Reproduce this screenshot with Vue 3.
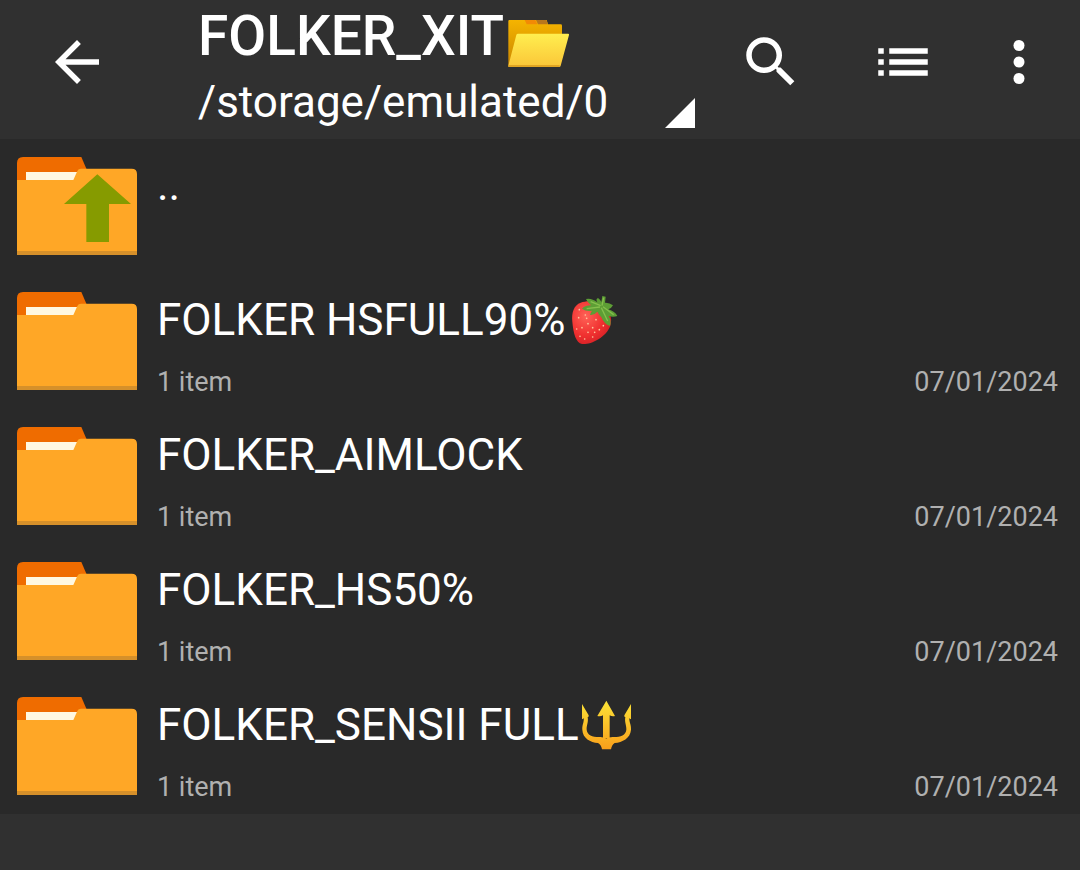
<template>
    <div class="screen">
        <header class="toolbar">
            <button class="back" type="button" aria-label="Back">
                <svg class="icon" viewBox="0 0 24 24">
                    <path d="M20 11H7.83l5.59-5.59L12 4l-8 8 8 8 1.41-1.41L7.83 13H20v-2z" />
                </svg>
            </button>

            <button class="location" type="button" aria-haspopup="listbox">
                <span class="location-text">
                    <span class="title">
                        FOLKER_XIT<svg
                            class="title-emoji"
                            viewBox="24 -9 186 186"
                            role="img"
                            aria-label="Open folder"
                        >
                            <defs>
                                <linearGradient id="folder-back" x1="0" y1="0" x2="0" y2="1">
                                    <stop offset="0" stop-color="#f5b400" />
                                    <stop offset="1" stop-color="#c98500" />
                                </linearGradient>
                                <linearGradient id="folder-front" x1="0" y1="0" x2="0" y2="1">
                                    <stop offset="0" stop-color="#ffee4f" />
                                    <stop offset="1" stop-color="#fbc638" />
                                </linearGradient>
                            </defs>
                            <path
                                d="M25 33Q25 30 28 30H140L144 43H182Q186 43 186 47V90L60 168H28Q25 168 25 165Z"
                                fill="url(#folder-back)"
                            />
                            <path d="M74 30H106L112 43H80Z" fill="#f28a05" />
                            <path d="M108 30H139L144 43H114Z" fill="#b8761c" />
                            <path
                                d="M54 71H204Q208 71 207 75L182 167Q181 171 177 171H28Q24 171 25 167L49 75Q50 71 54 71Z"
                                fill="url(#folder-front)"
                            />
                            <path d="M26 168H179" stroke="#d99a1c" stroke-width="4" />
                        </svg>
                    </span>
                    <span class="path">/storage/emulated/0</span>
                </span>
                <svg class="corner" viewBox="0 0 30 30">
                    <path d="M30 0V30H0Z" />
                </svg>
            </button>

            <button class="action" type="button" aria-label="Search">
                <svg class="icon" viewBox="0 0 24 24">
                    <path
                        d="M15.5 14h-.79l-.28-.27A6.47 6.47 0 0 0 16 9.5 6.5 6.5 0 1 0 9.5 16c1.61 0 3.09-.59 4.23-1.57l.27.28v.79l5 4.99L20.49 19l-4.99-5zm-6 0C7.01 14 5 11.99 5 9.5S7.01 5 9.5 5 14 7.01 14 9.5 11.99 14 9.5 14z"
                    />
                </svg>
            </button>
            <button class="action" type="button" aria-label="View mode">
                <svg class="icon" viewBox="0 0 24 24">
                    <path
                        d="M3 13h2v-2H3v2zm0 4h2v-2H3v2zm0-8h2V7H3v2zm4 4h14v-2H7v2zm0 4h14v-2H7v2zM7 7v2h14V7H7z"
                    />
                </svg>
            </button>
            <button class="action overflow" type="button" aria-label="More options">
                <svg class="icon" viewBox="0 0 24 24">
                    <circle cx="12" cy="6" r="2" />
                    <circle cx="12" cy="12" r="2" />
                    <circle cx="12" cy="18" r="2" />
                </svg>
            </button>
        </header>

        <ul class="files">
            <li v-for="file in files" :key="file.name">
                <a class="row" href="#">
                    <svg class="folder" viewBox="51 36 360 294" aria-hidden="true">
                        <path d="M51 54Q51 36 69 36H244L262 78V110H51Z" fill="#ef6c00" />
                        <path d="M78 81H236L222 108H78Z" fill="#fff8e1" />
                        <path
                            d="M51 105H220L232 78Q235 71 243 71H395Q411 71 411 87V330H51Z"
                            fill="#ffa726"
                        />
                        <path d="M51 318H411V330H51Z" fill="#d6902a" />
                        <path
                            v-if="file.up"
                            d="M292 88L393 177H327V291H259V177H192Z"
                            fill="#869b00"
                        />
                    </svg>
                    <span class="details">
                        <span class="name">
                            {{ file.name
                            }}<svg
                                v-if="file.emoji === 'strawberry'"
                                class="name-emoji"
                                viewBox="21 27 156 156"
                                role="img"
                                aria-label="Strawberry"
                            >
                                <defs>
                                    <radialGradient id="berry" cx="0.35" cy="0.35" r="0.75">
                                        <stop offset="0" stop-color="#ff6257" />
                                        <stop offset="0.6" stop-color="#f0302f" />
                                        <stop offset="1" stop-color="#cf1d24" />
                                    </radialGradient>
                                </defs>
                                <path
                                    d="M62 53C42 60 34 82 37 110C40 146 48 173 66 177C90 180 138 158 151 122C158 100 150 75 125 60C105 46 80 47 62 53Z"
                                    fill="url(#berry)"
                                />
                                <g fill="#ffc9a0">
                                    <circle v-for="(s, i) in seeds" :key="i" :cx="s[0]" :cy="s[1]" r="2.5" />
                                </g>
                                <path
                                    d="M78 42Q96 39 112 52Q106 42 114 39Q121 43 124 51L127 33L137 35L135 53Q148 52 159 61Q154 71 145 73Q165 79 172 93Q160 98 146 93Q155 108 150 123Q132 117 124 97Q116 88 112 80Q102 92 90 90Q92 82 96 77Q78 80 66 71Q76 61 93 61Q82 52 78 42Z"
                                    fill="#5d9e35"
                                />
                                <path
                                    d="M122 62L92 50M120 66L80 71M124 68L143 108M129 65L161 89M126 62L131 38"
                                    fill="none"
                                    stroke="#86bf4d"
                                    stroke-width="4"
                                />
                            </svg>
                            <svg
                                v-if="file.emoji === 'trident'"
                                class="name-emoji"
                                viewBox="33 27 156 156"
                                role="img"
                                aria-label="Trident"
                            >
                                <defs>
                                    <linearGradient
                                        id="gold"
                                        gradientUnits="userSpaceOnUse"
                                        x1="0"
                                        y1="32"
                                        x2="0"
                                        y2="178"
                                    >
                                        <stop offset="0" stop-color="#fbe337" />
                                        <stop offset="1" stop-color="#f99f1b" />
                                    </linearGradient>
                                </defs>
                                <path
                                    d="M109 32L135 78Q126 80 119 76V145H99V76Q92 80 82 78ZM36 42L56 76Q57 82 53 81C56 98 49 106 50 119C51 136 70 142 91 141Q101 141 109 146Q117 141 128 141C149 142 168 136 169 119C170 106 163 98 166 81Q162 82 163 76L183 42V88Q179 87 178 84C177 96 184 104 183 119C181 145 157 157 134 159Q126 163 123 178H96Q93 163 84 159C61 157 38 145 37 119C36 104 43 96 41 84Q40 87 36 88Z"
                                    fill="url(#gold)"
                                />
                            </svg>
                        </span>
                        <span v-if="!file.up" class="meta">
                            <span>{{ file.count }}</span>
                            <time>{{ file.date }}</time>
                        </span>
                    </span>
                </a>
            </li>
        </ul>
    </div>
</template>

<script setup>
const files = [
    { name: '..', up: true },
    { name: 'FOLKER HSFULL90%', emoji: 'strawberry', count: '1 item', date: '07/01/2024' },
    { name: 'FOLKER_AIMLOCK', count: '1 item', date: '07/01/2024' },
    { name: 'FOLKER_HS50%', count: '1 item', date: '07/01/2024' },
    { name: 'FOLKER_SENSII FULL', emoji: 'trident', count: '1 item', date: '07/01/2024' },
];

const seeds = [
    [58, 74], [76, 90], [56, 98], [80, 100], [50, 132], [66, 128], [84, 116], [98, 128],
    [60, 154], [84, 142], [104, 142], [118, 134], [74, 162], [98, 156], [130, 122], [108, 104],
];
</script>

<style>
body {
    margin: 0;
    background: #303030;
}
</style>

<style scoped>
.screen {
    min-height: 100vh;
    background: #303030;
    color: #fff;
    font-family: Roboto, 'Liberation Sans', sans-serif;
}

.toolbar {
    display: flex;
    height: 139px;
}

button {
    padding: 0;
    border: 0;
    background: none;
    color: inherit;
    font: inherit;
    text-align: left;
    cursor: pointer;
}

.back,
.action {
    display: flex;
    flex-shrink: 0;
    justify-content: center;
    align-items: flex-start;
    padding-top: 29px;
}

.back {
    width: 154px;
    margin-right: 44px;
}

.action {
    width: 132px;
}

.overflow {
    width: 100px;
    margin-right: 11px;
}

.icon {
    width: 66px;
    height: 66px;
    fill: currentColor;
}

.location {
    display: flex;
    flex: 1;
    justify-content: space-between;
    align-items: flex-end;
    min-width: 0;
    padding: 0 10px 11px 0;
}

.location-text {
    display: flex;
    flex-direction: column;
    gap: 7px;
    white-space: nowrap;
}

.title {
    font-size: 55px;
    font-weight: 500;
    line-height: 66px;
}

.title-emoji {
    width: 62px;
    height: 62px;
    margin-left: 4px;
    vertical-align: -14px;
}

.path {
    font-size: 44px;
    line-height: 52px;
}

.corner {
    width: 30px;
    height: 30px;
    fill: currentColor;
}

.files {
    margin: 0;
    padding: 0;
    background: #292929;
    list-style: none;
}

.row {
    display: flex;
    gap: 20px;
    box-sizing: border-box;
    height: 135px;
    padding: 18px 22px 0 17px;
    color: inherit;
    text-decoration: none;
}

.folder {
    flex-shrink: 0;
    width: 120px;
    height: 98px;
}

.details {
    display: flex;
    flex: 1;
    flex-direction: column;
    gap: 20px;
    min-width: 0;
    padding-top: 2px;
}

.name {
    font-size: 44px;
    line-height: 52px;
    white-space: nowrap;
}

.name-emoji {
    width: 52px;
    height: 52px;
    margin-left: 2px;
    vertical-align: -11px;
}

.meta {
    display: flex;
    justify-content: space-between;
    color: #b0b0b0;
    font-size: 27px;
    line-height: 32px;
}
</style>
